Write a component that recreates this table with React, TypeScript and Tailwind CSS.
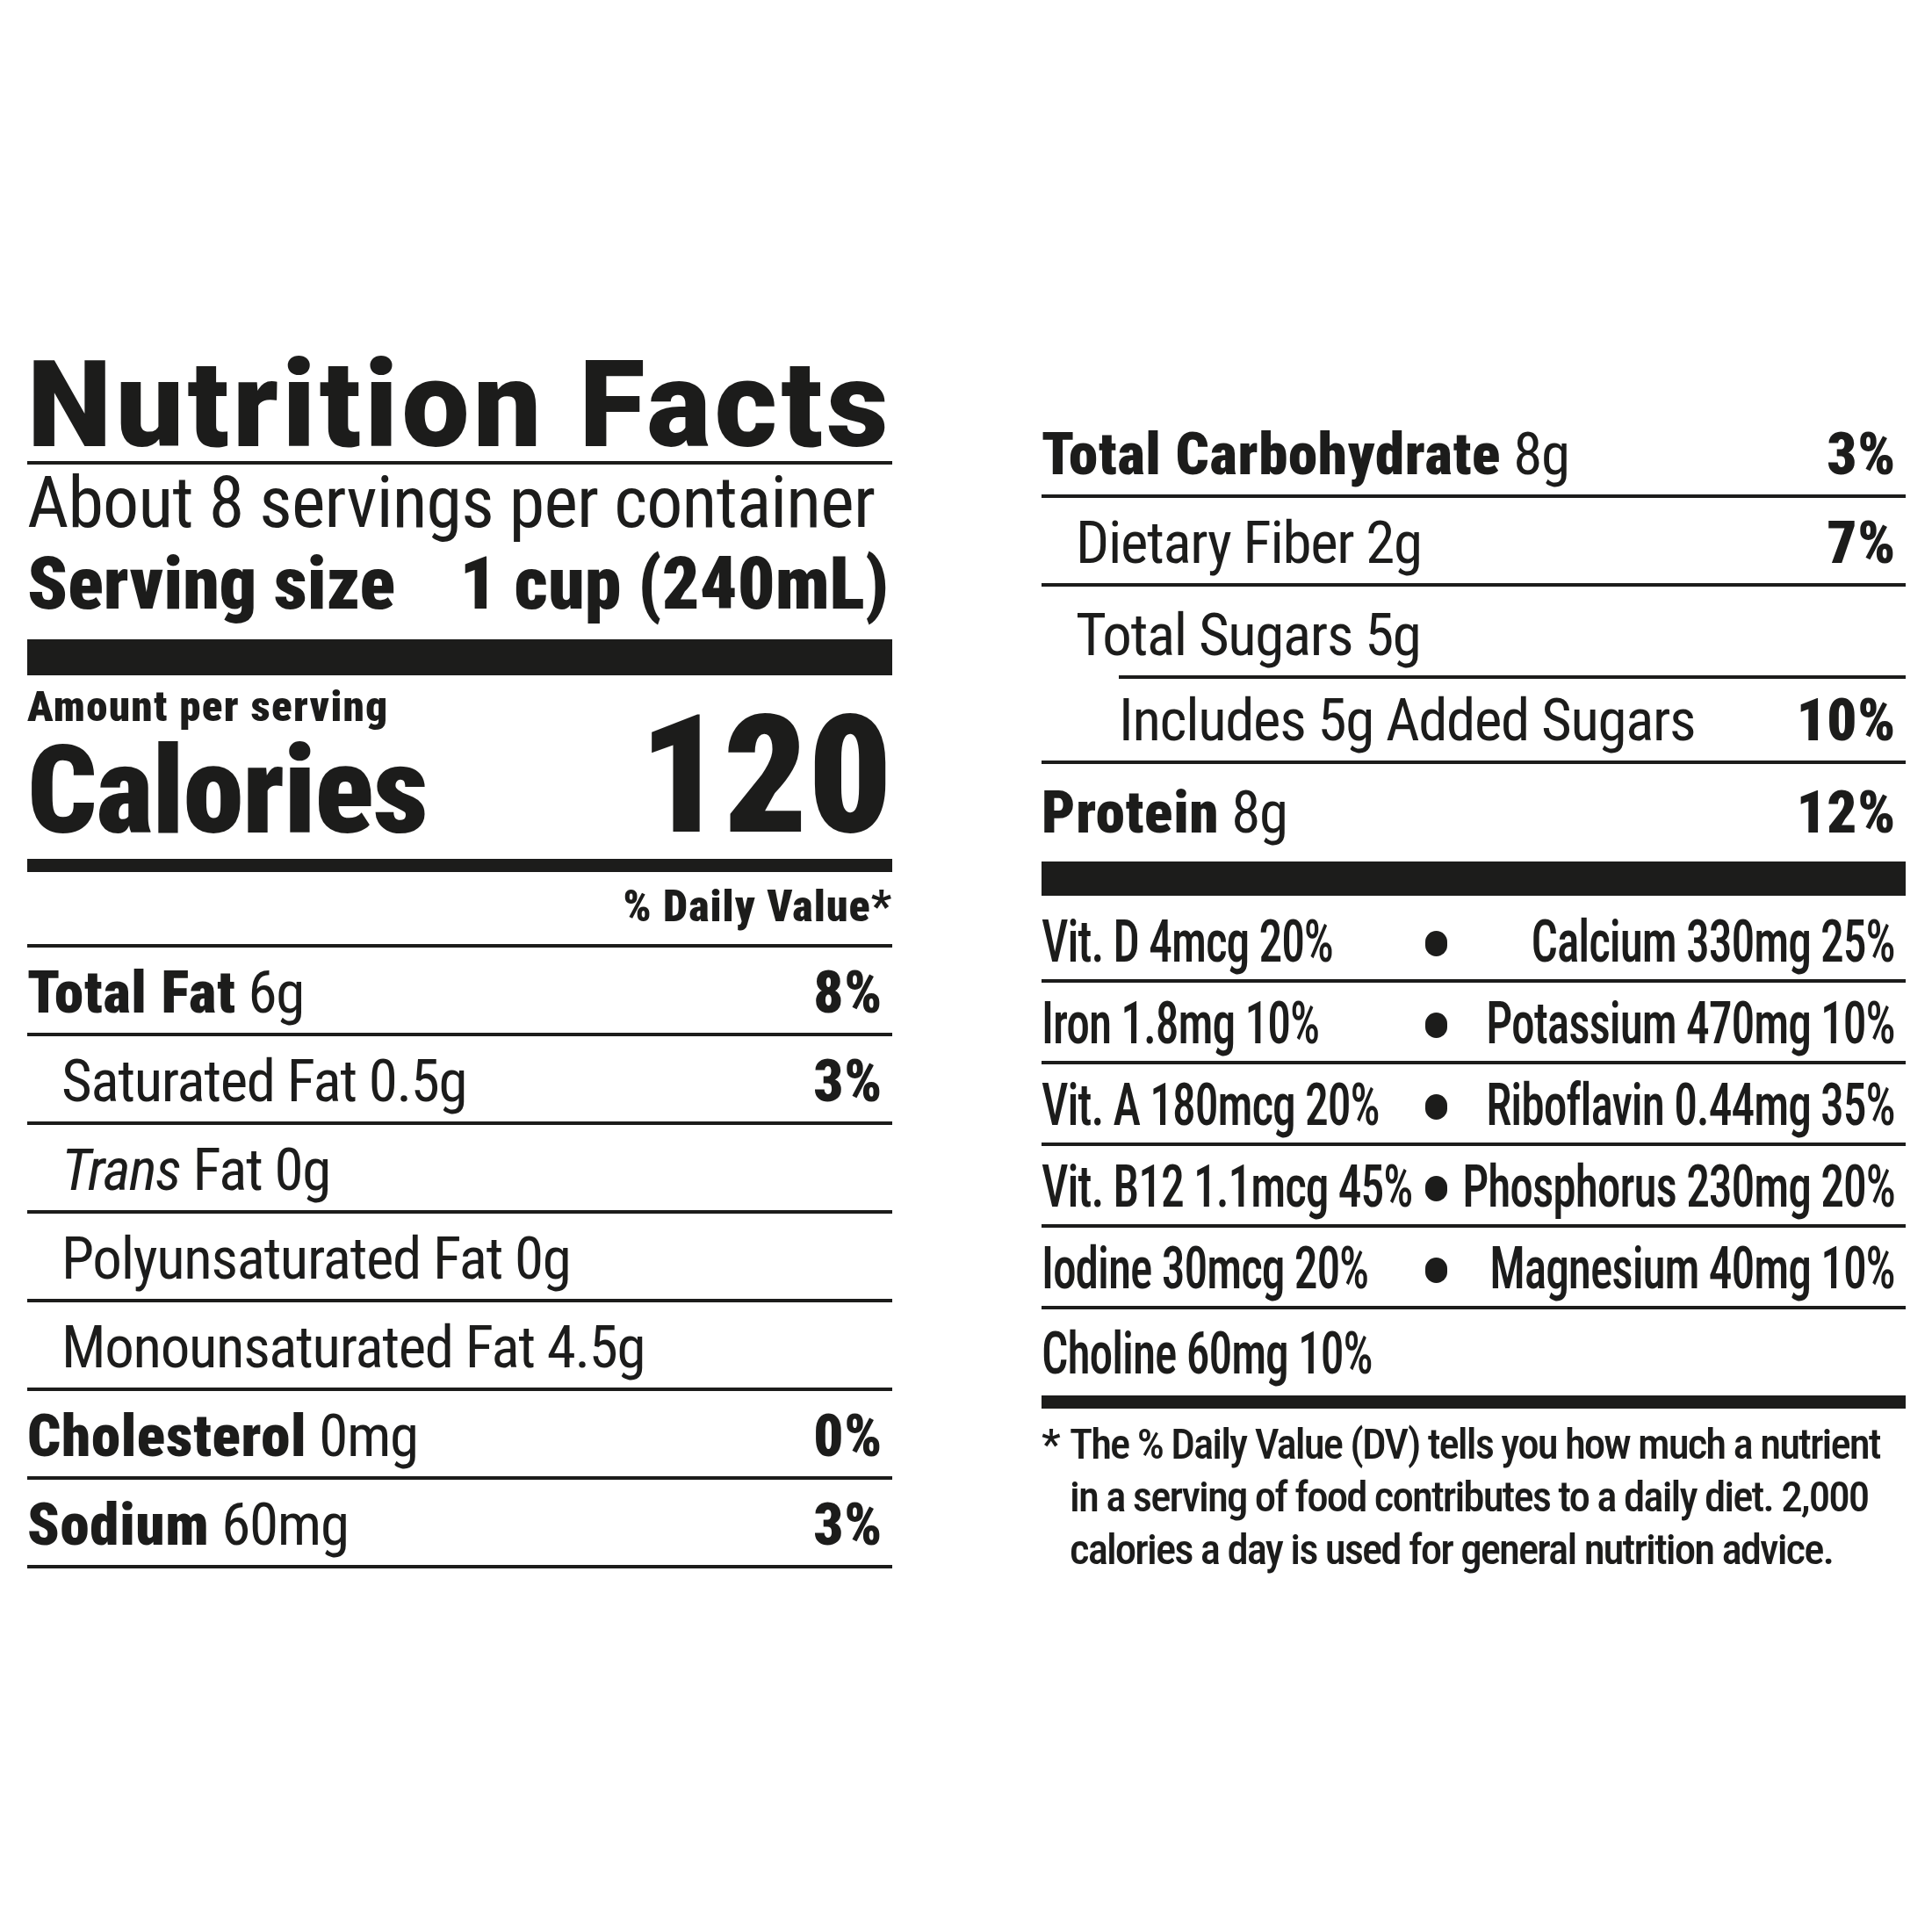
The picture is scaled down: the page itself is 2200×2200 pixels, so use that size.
import React from "react";

const heavy = "font-black";
const heavyWide = "font-black tracking-[0.01em]";

interface RowProps {
  label: React.ReactNode;
  amount?: string;
  dv?: string;
  bold?: boolean;
  indent?: string;
  border?: boolean;
}

const Row: React.FC<RowProps> = ({ label, amount, dv, bold, indent = "", border = true }) => {
  return (
    <div
      className={`h-[101px] flex items-end justify-between pb-[12px] pr-[11px] text-[67px] leading-none tracking-[-0.02em] whitespace-nowrap ${
        border ? "border-b-4 border-[#1c1c1b]" : ""
      } ${indent}`}
    >
      <span>
        <span className={bold ? heavyWide : ""}>{label}</span>
        {amount ? ` ${amount}` : ""}
      </span>
      {dv && <span className={heavyWide}>{dv}</span>}
    </div>
  );
};

const vitamins: [string, string][] = [
  ["Vit. D 4mcg 20%", "Calcium 330mg 25%"],
  ["Iron 1.8mg 10%", "Potassium 470mg 10%"],
  ["Vit. A 180mcg 20%", "Riboflavin 0.44mg 35%"],
  ["Vit. B12 1.1mcg 45%", "Phosphorus 230mg 20%"],
  ["Iodine 30mcg 20%", "Magnesium 40mg 10%"],
];

export default function App() {
  return (
    <div className="w-[2200px] h-[2200px] bg-white text-[#1c1c1b] flex gap-[170px] pl-[31px] pt-[397px] [font-family:Roboto,'Liberation_Sans',sans-serif] [font-stretch:75%]">
      {/* left panel */}
      <div className="w-[985px] flex flex-col">
        <h1 className="text-[137px] leading-[128px] font-black tracking-[4.5px] whitespace-nowrap [font-stretch:100%]">
          Nutrition Facts
        </h1>
        <div className="h-[4px] bg-[#1c1c1b]" />
        <p className="mt-[2px] text-[82px] leading-[82px] tracking-[-0.01em] whitespace-nowrap">
          About 8 servings per container
        </p>
        <div className={`mt-[10px] flex justify-between pr-[4px] text-[84px] leading-[84px] whitespace-nowrap ${heavy}`}>
          <span>Serving size</span>
          <span>1 cup (240mL)</span>
        </div>
        <div className="mt-[21px] h-[41px] bg-[#1c1c1b]" />
        <div className="flex items-end justify-between">
          <div className="flex flex-col">
            <p className={`mt-[11px] text-[49px] leading-[49px] tracking-[1.3px] whitespace-nowrap ${heavy}`}>
              Amount per serving
            </p>
            <p className={`mt-[2px] text-[139px] leading-[139px] tracking-[-1px] ${heavy}`}>Calories</p>
          </div>
          <p className={`text-[188px] leading-[173px] ${heavy}`}>120</p>
        </div>
        <div className="mt-[8px] h-[15px] bg-[#1c1c1b]" />
        <p className={`mt-[14px] text-right text-[50px] leading-[50px] tracking-[1px] whitespace-nowrap ${heavy}`}>
          % Daily Value*
        </p>
        <div className="mt-[18px] h-[4px] bg-[#1c1c1b]" />
        <Row label="Total Fat" amount="6g" dv="8%" bold />
        <Row label="Saturated Fat 0.5g" dv="3%" indent="pl-[39px]" />
        <Row
          label={
            <>
              <em>Trans</em> Fat 0g
            </>
          }
          indent="pl-[39px]"
        />
        <Row label="Polyunsaturated Fat 0g" indent="pl-[39px]" />
        <Row label="Monounsaturated Fat 4.5g" indent="pl-[39px]" />
        <Row label="Cholesterol" amount="0mg" dv="0%" bold />
        <Row label="Sodium" amount="60mg" dv="3%" bold />
      </div>

      {/* right panel */}
      <div className="w-[984px] mt-[69px] flex flex-col">
        <Row label="Total Carbohydrate" amount="8g" dv="3%" bold />
        <Row label="Dietary Fiber 2g" dv="7%" indent="pl-[39px]" />
        <Row label="Total Sugars 5g" indent="pl-[39px]" border={false} />
        <div className="border-b-4 border-[#1c1c1b]">
          <div className="ml-[88px] border-t-4 border-[#1c1c1b]">
            <div className="h-[93px] flex items-end justify-between pb-[12px] pr-[11px] text-[67px] leading-none tracking-[-0.02em] whitespace-nowrap">
              <span>Includes 5g Added Sugars</span>
              <span className={heavyWide}>10%</span>
            </div>
          </div>
        </div>
        <Row label="Protein" amount="8g" dv="12%" bold border={false} />
        <div className="mt-[10px] h-[39px] bg-[#1c1c1b]" />
        {vitamins.map(([left, right], i) => (
          <div
            key={left}
            className={`grid grid-cols-[429px_40px_minmax(0,1fr)] items-end border-b-4 border-[#1c1c1b] text-[67px] leading-none font-medium tracking-[-0.02em] whitespace-nowrap ${
              i === 0 ? "h-[99px]" : "h-[93px]"
            }`}
          >
            <span className="pb-[9px]">
              <span className="inline-block origin-left scale-x-[0.8]">{left}</span>
            </span>
            <span className="mb-[26px] justify-self-center w-[25px] h-[29px] rounded-full bg-[#1c1c1b]" />
            <span className="pb-[9px] pr-[12px] flex justify-end">
              <span className="inline-block origin-right scale-x-[0.8]">{right}</span>
            </span>
          </div>
        ))}
        <div className="h-[93px] flex items-end pb-[9px] text-[67px] leading-none font-medium tracking-[-0.02em] whitespace-nowrap">
          <span className="inline-block origin-left scale-x-[0.8]">Choline 60mg 10%</span>
        </div>
        <div className="mt-[5px] h-[15px] bg-[#1c1c1b]" />
        <div className="mt-[11px] flex text-[49px] leading-[60px] font-medium tracking-[-0.04em] whitespace-nowrap">
          <span className="w-[32px]">*</span>
          <p>
            The % Daily Value (DV) tells you how much a nutrient
            <br />
            in a serving of food contributes to a daily diet. 2,000
            <br />
            calories a day is used for general nutrition advice.
          </p>
        </div>
      </div>
    </div>
  );
}
